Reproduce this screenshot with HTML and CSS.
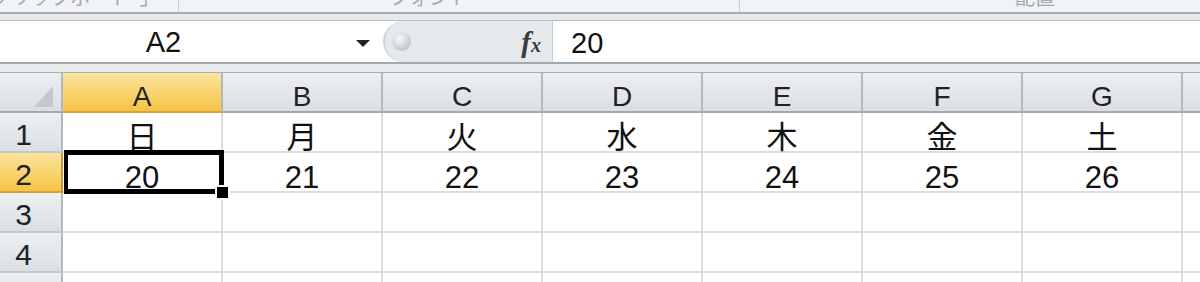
FILE: index.html
```html
<!DOCTYPE html>
<html lang="ja">
<head>
  <meta charset="UTF-8" />
  <title>Book1 - Excel</title>
  <link rel="stylesheet" href="styles.css">
</head>
<body>
  <div class="ribbon-groups">
    <div class="group group-clip"><span class="group-label">クリップボード</span><span class="launcher">⌟</span></div>
    <div class="group group-font"><span class="group-label">フォント</span></div>
    <div class="group group-align"><span class="group-label">配置</span></div>
  </div>
  <div class="ribbon-edge"></div>

  <div class="formula-bar">
    <div class="name-box">
      <span class="name-text">A2</span>
      <span class="name-arrow"></span>
    </div>
    <div class="fx-area">
      <span class="splitter"></span>
      <span class="fx">f<small>x</small></span>
    </div>
    <div class="formula-input">20</div>
  </div>
  <div class="bar-gap"></div>

  <div class="sheet">
    <div class="corner">
      <svg width="19" height="21" viewBox="0 0 19 21"><polygon points="19,0 19,21 0,21" fill="#c3c8ce"/></svg>
    </div>
    <div class="col-head active">A</div>
    <div class="col-head">B</div>
    <div class="col-head">C</div>
    <div class="col-head">D</div>
    <div class="col-head">E</div>
    <div class="col-head">F</div>
    <div class="col-head">G</div>
    <div class="col-head">H</div>

    <div class="row-head">1</div>
    <div class="cell">日</div>
    <div class="cell">月</div>
    <div class="cell">火</div>
    <div class="cell">水</div>
    <div class="cell">木</div>
    <div class="cell">金</div>
    <div class="cell">土</div>
    <div class="cell"></div>

    <div class="row-head active">2</div>
    <div class="cell selected">20</div>
    <div class="cell">21</div>
    <div class="cell">22</div>
    <div class="cell">23</div>
    <div class="cell">24</div>
    <div class="cell">25</div>
    <div class="cell">26</div>
    <div class="cell"></div>

    <div class="row-head">3</div>
    <div class="cell"></div><div class="cell"></div><div class="cell"></div><div class="cell"></div>
    <div class="cell"></div><div class="cell"></div><div class="cell"></div><div class="cell"></div>

    <div class="row-head">4</div>
    <div class="cell"></div><div class="cell"></div><div class="cell"></div><div class="cell"></div>
    <div class="cell"></div><div class="cell"></div><div class="cell"></div><div class="cell"></div>

    <div class="row-head">5</div>
    <div class="cell"></div><div class="cell"></div><div class="cell"></div><div class="cell"></div>
    <div class="cell"></div><div class="cell"></div><div class="cell"></div><div class="cell"></div>
  </div>
</body>
</html>
```

FILE: styles.css
```css
body {
  margin: 0;
  width: 1200px;
  height: 282px;
  overflow: hidden;
  background: #ffffff;
  font-family: "Liberation Sans", "Noto Sans CJK JP", sans-serif;
  color: #111;
}
.ribbon-groups {
  display: flex;
  height: 12px;
  background: #f1f3f5;
  overflow: hidden;
}
.group {
  display: flex;
  align-items: flex-end;
  justify-content: center;
  height: 12px;
  border-right: 1px solid #c9cdd2;
  color: #a2a8af;
  font-size: 20px;
}
.group-label,
.launcher {
  line-height: 27px;
  height: 27px;
  flex-shrink: 0;
}
.group-clip {
  width: 179px;
  gap: 8px;
  padding-right: 40px;
  box-sizing: border-box;
}
.group-font {
  width: 561px;
  padding-right: 60px;
  box-sizing: border-box;
}
.group-align {
  flex: 1;
  border-right: none;
  padding-left: 130px;
}
.ribbon-edge {
  height: 6px;
  border-top: 2px solid #a8adb3;
  background: #e6e9ed;
}
.formula-bar {
  display: flex;
  height: 41px;
  border-top: 1px solid #b7bcc2;
  border-bottom: 2px solid #a3a9b0;
  background: #fff;
}
.name-box {
  width: 383px;
  display: flex;
  align-items: center;
}
.name-text {
  width: 327px;
  text-align: center;
  font-size: 29px;
  line-height: 41px;
  padding-top: 2px;
}
.name-arrow {
  width: 0;
  height: 0;
  margin-left: 29px;
  margin-top: 3px;
  border-left: 7px solid transparent;
  border-right: 7px solid transparent;
  border-top: 7px solid #222;
}
.fx-area {
  width: 169px;
  display: flex;
  align-items: center;
  justify-content: space-between;
  background: #e6e9ec;
  border-radius: 21px 0 0 21px;
  border-left: 2px solid #cfd3d8;
  box-sizing: border-box;
  padding: 0 11px 0 7px;
}
.splitter {
  width: 19px;
  height: 19px;
  border-radius: 50%;
  background: radial-gradient(circle at 40% 35%, #f7f8f9 0%, #cfd2d6 55%, #b2b6bb 100%);
}
.fx {
  font-family: "Liberation Serif", serif;
  font-style: italic;
  font-weight: bold;
  font-size: 29px;
  color: #3a3d40;
  padding-top: 2px;
}
.fx small {
  font-size: 20px;
}
.formula-input {
  flex: 1;
  border-left: 1px solid #c7ccd1;
  padding-left: 18px;
  font-size: 29px;
  line-height: 41px;
  padding-top: 2px;
  box-sizing: border-box;
}
.bar-gap {
  height: 8px;
  background: #e8ebee;
}
.sheet {
  display: grid;
  grid-template-columns: 63px repeat(8, 160px);
  grid-auto-rows: 40px;
  border-top: 1px solid #a9aeb4;
}
.corner,
.col-head,
.row-head {
  background: linear-gradient(#edf0f2, #dadee3);
  box-sizing: border-box;
  border-right: 2px solid #b3b8be;
  border-bottom: 2px solid #a3a9b0;
  color: #222;
}
.corner {
  display: flex;
  justify-content: flex-end;
  align-items: flex-end;
  padding: 0 8px 4px 0;
}
.col-head {
  text-align: center;
  font-size: 28px;
  line-height: 28px;
  padding-top: 10px;
}
.row-head {
  text-align: center;
  font-size: 30px;
  line-height: 30px;
  padding-top: 7px;
  padding-right: 14px;
  border-bottom: 2px solid #c3c8ce;
}
.col-head.active,
.row-head.active {
  background: linear-gradient(#fbe49f, #f6c443);
  border-bottom-color: #d2a53c;
}
.row-head.active {
  border-right-color: #c69a3a;
}
.cell {
  box-sizing: border-box;
  border-right: 2px solid #dcdcdc;
  border-bottom: 2px solid #dcdcdc;
  text-align: center;
  font-size: 31px;
  line-height: 31px;
  padding-top: 9px;
}
.cell.selected {
  position: relative;
}
.cell.selected::after {
  content: "";
  position: absolute;
  left: 1px;
  top: -3px;
  right: -3px;
  bottom: -3px;
  border-style: solid;
  border-color: #000;
  border-width: 5px 5px 5px 4px;
}
.cell.selected::before {
  content: "";
  position: absolute;
  left: 152px;
  top: 32px;
  width: 11px;
  height: 11px;
  background: #000;
  border: 2px solid #fff;
  z-index: 1;
}
```
